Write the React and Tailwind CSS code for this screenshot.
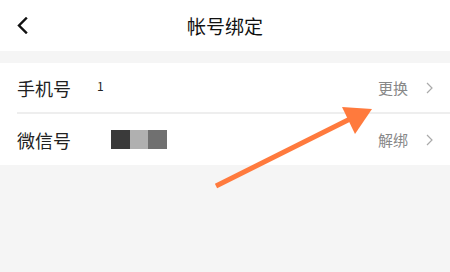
export default function App() {
  const font = { fontFamily: '"Noto Sans CJK SC", "Noto Sans", sans-serif' };
  return (
    <div className="relative w-[450px] h-[272px] bg-[#f5f5f5] overflow-hidden" style={font}>
      <div className="h-[51px] bg-white flex items-center relative">
        <svg className="absolute left-[16px] top-[17px]" width="12" height="17" viewBox="0 0 12 17">
          <path d="M10 1.5 L3 8.5 L10 15.5" fill="none" stroke="#111" strokeWidth="2.4" strokeLinecap="square" />
        </svg>
        <div className="w-full text-center text-[19px] text-[#111] leading-none">帐号绑定</div>
      </div>
      <div className="h-[12px]" />
      <div className="bg-white">
        <div className="h-[49px] flex items-center pl-[17px] pr-[17px]">
          <span className="text-[18px] text-[#222] w-[80px] leading-none">手机号</span>
          <span className="text-[12px] text-[#222] leading-none -mt-[4px]">1</span>
          <span className="flex-1" />
          <span className="text-[15px] text-[#888] leading-none">更换</span>
          <svg className="ml-[18px]" width="7" height="12" viewBox="0 0 7 12">
            <path d="M1 1 L6 6 L1 11" fill="none" stroke="#aaa" strokeWidth="1.2" />
          </svg>
        </div>
        <div className="ml-[17px] h-[2px] bg-[#eeeeee]" />
        <div className="h-[51px] flex items-center pl-[17px] pr-[17px]">
          <span className="text-[18px] text-[#222] w-[94px] leading-none">微信号</span>
          <div className="flex h-[19px]">
            <div className="w-[19px] bg-[#3a3a3a]" />
            <div className="w-[18px] bg-[#b0b0b0]" />
            <div className="w-[19px] bg-[#707070]" />
          </div>
          <span className="flex-1" />
          <span className="text-[15px] text-[#888] leading-none">解绑</span>
          <svg className="ml-[18px]" width="7" height="12" viewBox="0 0 7 12">
            <path d="M1 1 L6 6 L1 11" fill="none" stroke="#aaa" strokeWidth="1.2" />
          </svg>
        </div>
      </div>
      <svg className="absolute left-0 top-0 pointer-events-none" width="450" height="272" viewBox="0 0 450 272">
        <line x1="216" y1="186" x2="352" y2="118" stroke="#ff7a3d" strokeWidth="5" />
        <polygon points="342,107 372,109 355,134" fill="#ff7a3d" />
      </svg>
    </div>
  );
}
